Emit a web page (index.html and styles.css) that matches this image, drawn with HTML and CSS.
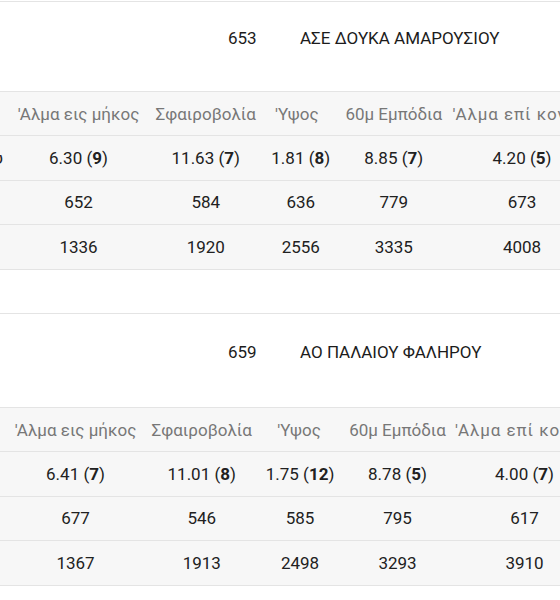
FILE: index.html
```html
<!DOCTYPE html>
<html lang="el">
<head>
<meta charset="utf-8">
<title>Αποτελέσματα</title>
<link rel="stylesheet" href="styles.css">
</head>
<body>
<section class="block b1">
  <div class="team"><span class="team-no">653</span><span class="team-name">ΑΣΕ ΔΟΥΚΑ ΑΜΑΡΟΥΣΙΟΥ</span></div>
  <div class="scroll">
    <table class="results">
      <colgroup>
        <col class="c0"><col class="c1"><col class="c2"><col class="c3"><col class="c4"><col class="c5"><col class="c6">
      </colgroup>
      <thead>
        <tr><th class="lead"></th><th>'Αλμα εις μήκος</th><th>Σφαιροβολία</th><th class="high">'Υψος</th><th>60μ Εμπόδια</th><th class="wide">'Αλμα επί κοντώ</th><th>Σύνολο</th></tr>
      </thead>
      <tbody>
        <tr><td class="lead">Μαρία Βλάχου</td><td>6.30 (<b>9</b>)</td><td>11.63 (<b>7</b>)</td><td>1.81 (<b>8</b>)</td><td>8.85 (<b>7</b>)</td><td>4.20 (<b>5</b>)</td><td></td></tr>
        <tr><td class="lead"></td><td>652</td><td>584</td><td>636</td><td>779</td><td>673</td><td></td></tr>
        <tr><td class="lead"></td><td>1336</td><td>1920</td><td>2556</td><td>3335</td><td>4008</td><td></td></tr>
      </tbody>
    </table>
  </div>
</section>
<section class="block b2">
  <div class="team"><span class="team-no">659</span><span class="team-name">ΑΟ ΠΑΛΑΙΟΥ ΦΑΛΗΡΟΥ</span></div>
  <div class="scroll">
    <table class="results">
      <colgroup>
        <col class="c0"><col class="c1"><col class="c2"><col class="c3"><col class="c4"><col class="c5"><col class="c6">
      </colgroup>
      <thead>
        <tr><th class="lead"></th><th>'Αλμα εις μήκος</th><th>Σφαιροβολία</th><th class="high">'Υψος</th><th>60μ Εμπόδια</th><th class="wide">'Αλμα επί κοντώ</th><th>Σύνολο</th></tr>
      </thead>
      <tbody>
        <tr><td class="lead">Ελένη Σταύρου</td><td>6.41 (<b>7</b>)</td><td>11.01 (<b>8</b>)</td><td>1.75 (<b>12</b>)</td><td>8.78 (<b>5</b>)</td><td>4.00 (<b>7</b>)</td><td></td></tr>
        <tr><td class="lead"></td><td>677</td><td>546</td><td>585</td><td>795</td><td>617</td><td></td></tr>
        <tr><td class="lead"></td><td>1367</td><td>1913</td><td>2498</td><td>3293</td><td>3910</td><td></td></tr>
      </tbody>
    </table>
  </div>
</section>
</body>
</html>
```

FILE: styles.css
```css
html, body {
  margin: 0;
  padding: 0;
  background: #ffffff;
}

body {
  font-family: Roboto, "Noto Sans", "DejaVu Sans", sans-serif;
  font-size: 17px;
  color: #212121;
  width: 560px;
  overflow: hidden;
}

.b1 {
  margin-top: 1px;
}

.b2 {
  margin-top: 43.4px;
}

.team {
  box-sizing: border-box;
  border-top: 1px solid #e4e4e4;
  display: flex;
  align-items: flex-start;
  padding-left: 228px;
  line-height: 20px;
  color: #1c1c1c;
}

.b1 .team {
  height: 90px;
  padding-top: 26px;
}

.b2 .team {
  height: 94px;
  padding-top: 28px;
}

.team-no {
  width: 72px;
  flex: none;
}

.team-name {
  white-space: nowrap;
}

.scroll {
  overflow: hidden;
  width: 100%;
}

.results {
  border-collapse: collapse;
  table-layout: fixed;
  white-space: nowrap;
  background: #f7f7f7;
}

.results th,
.results td {
  padding: 0;
  height: 43.4px;
  text-align: center;
  border-bottom: 1px solid #e4e4e4;
  line-height: 20px;
  overflow: visible;
}

.results th {
  border-top: 1px solid #e4e4e4;
  font-weight: 400;
  color: #777777;
}

.results td b {
  font-weight: 700;
  color: #212121;
}

.results .lead {
  text-align: right;
  padding-right: 6px;
}

.results th.wide {
  text-align: left;
  letter-spacing: 0.9px;
}

.c0 { width: 160px; }
.c6 { width: 120px; }

/* block 1 column widths */
.b1 .results { width: 865.5px; margin-left: -151px; }
.b1 .c1 { width: 139px; }
.b1 .c2 { width: 115.5px; }
.b1 .c3 { width: 74.5px; }
.b1 .c4 { width: 111.5px; }
.b1 .c5 { width: 145px; }
.b1 th.wide { padding-left: 3px; }
.b1 th.high { padding-right: 8px; }

/* block 2 column widths */
.b2 .results { width: 869.5px; margin-left: -154px; }
.b2 .c1 { width: 139px; }
.b2 .c2 { width: 113.5px; }
.b2 .c3 { width: 83px; }
.b2 .c4 { width: 112px; }
.b2 .c5 { width: 142px; }
.b2 th.wide { padding-left: 1.5px; }
.b2 th.high { padding-right: 2px; }
```
